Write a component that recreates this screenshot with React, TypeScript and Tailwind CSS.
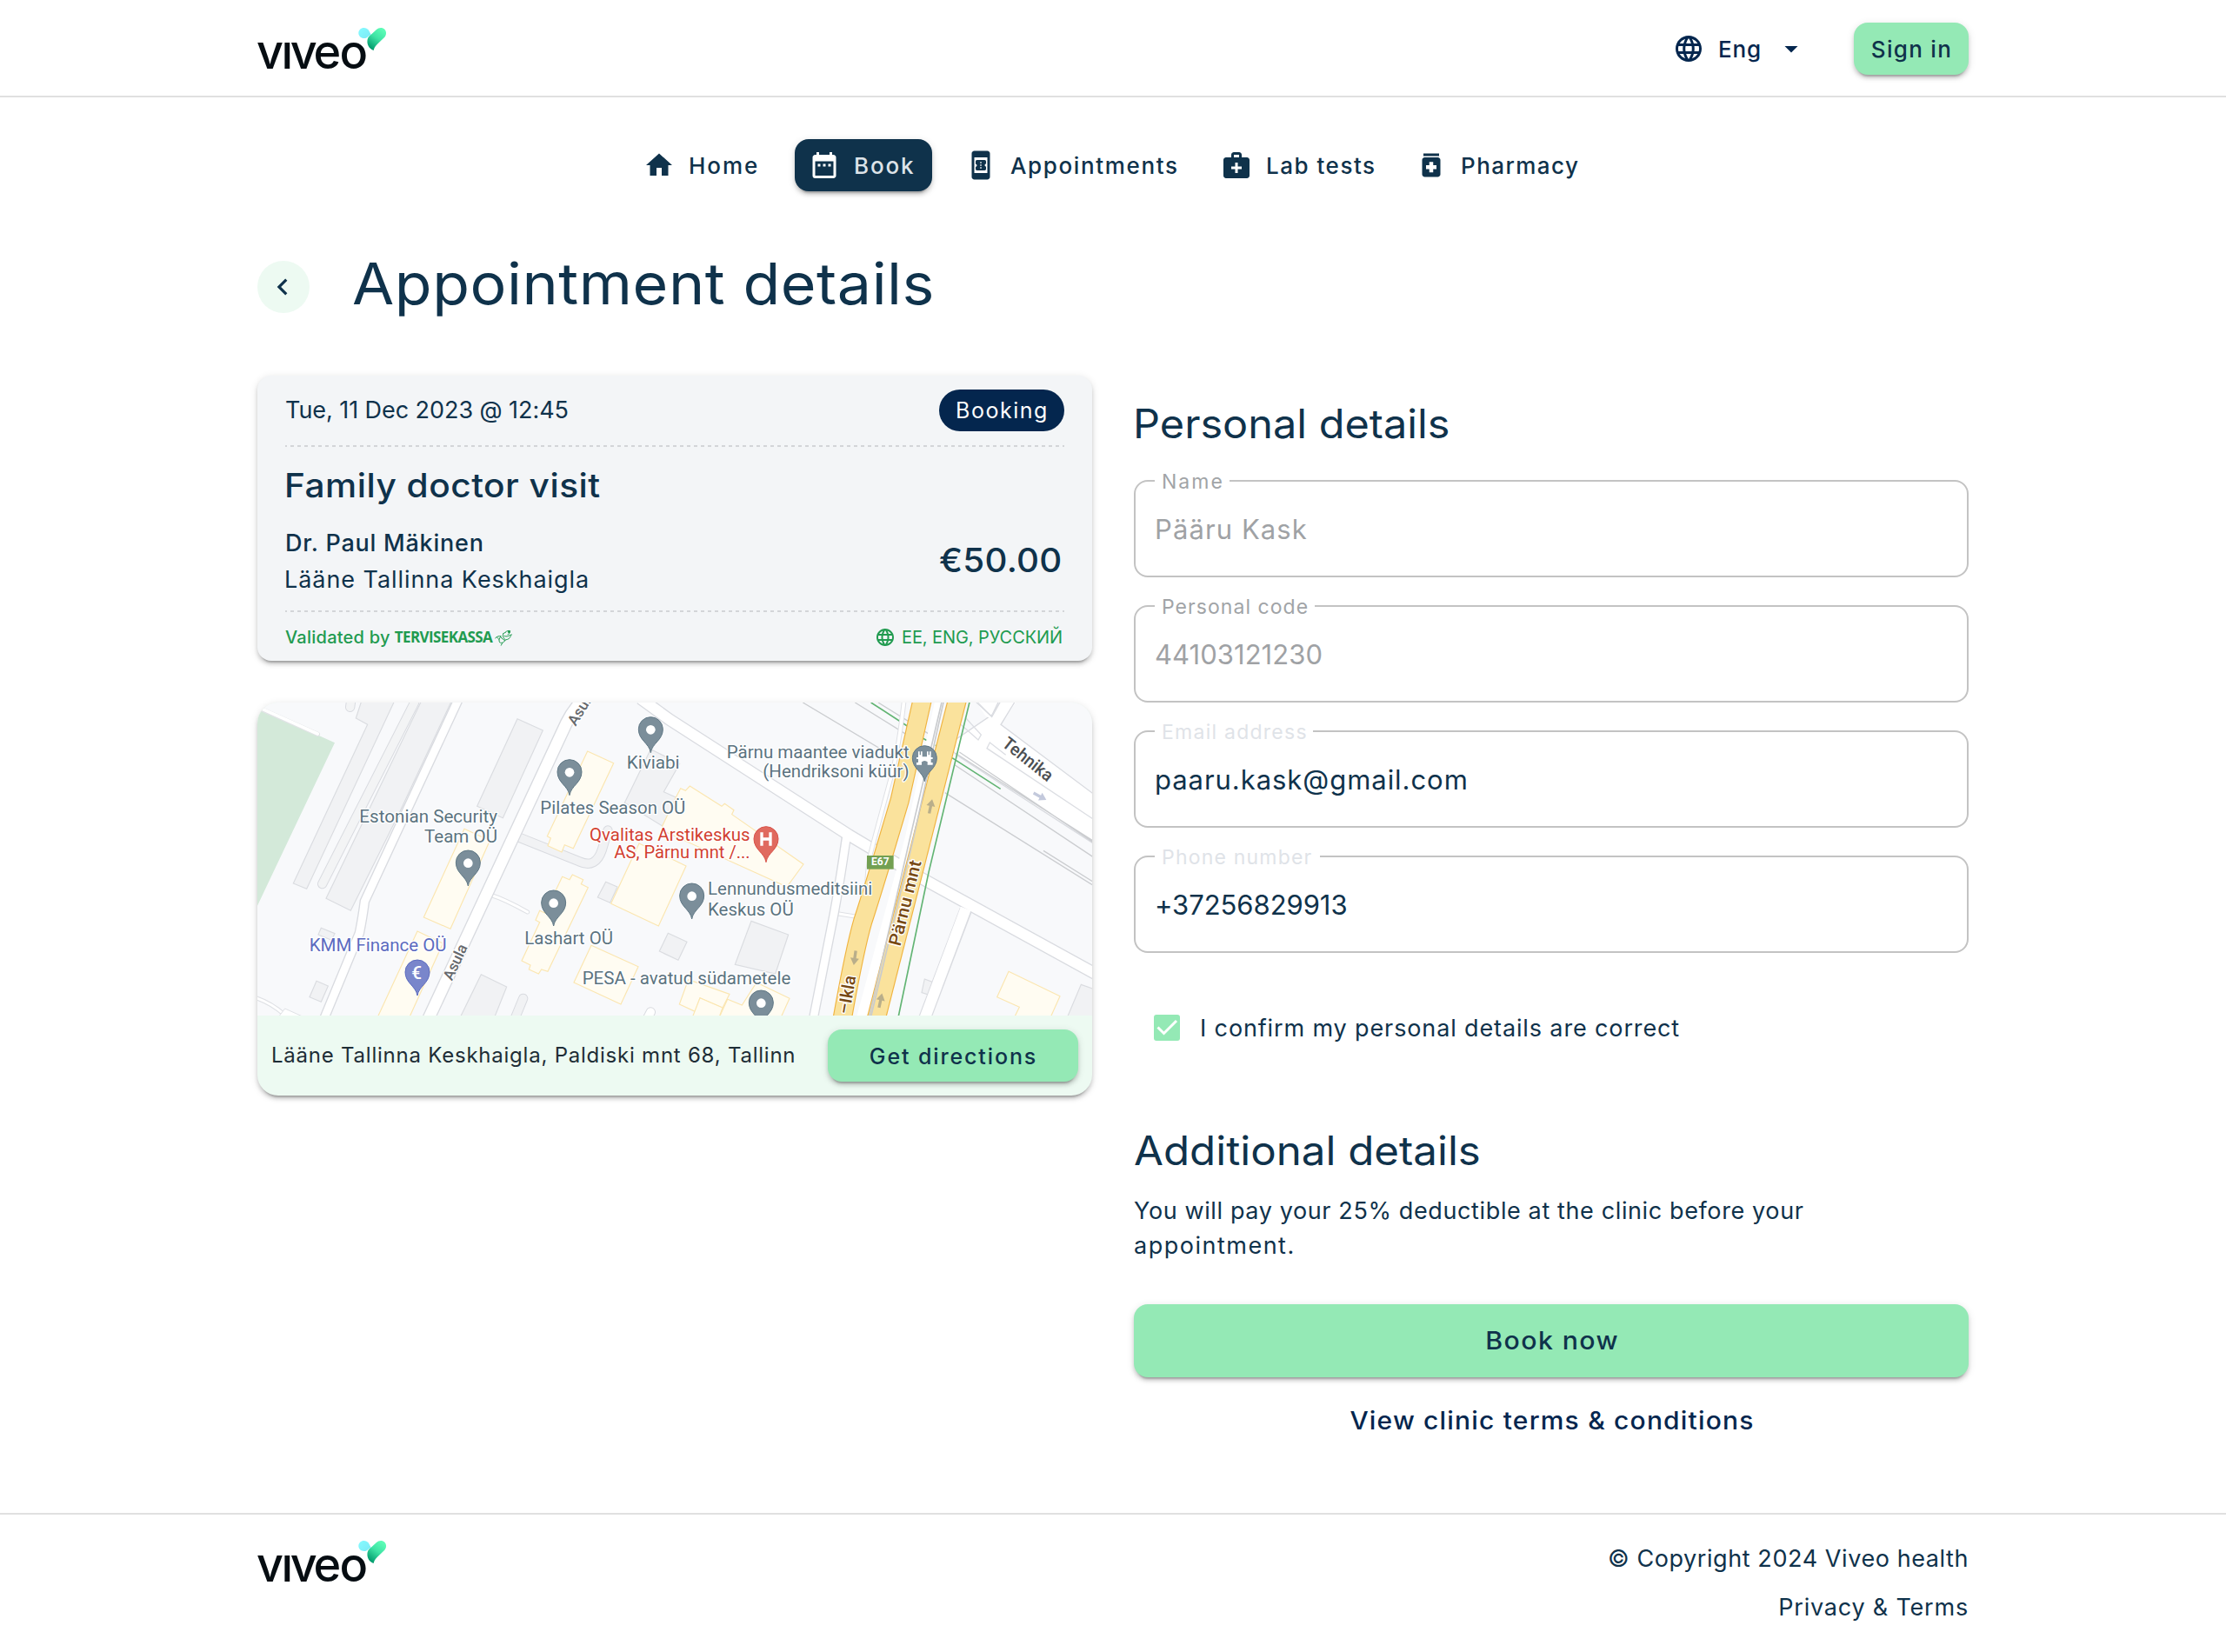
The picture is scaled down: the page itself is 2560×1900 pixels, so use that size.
import { useId } from "react";
import type { ReactNode } from "react";
import {
  MdArrowDropDown,
  MdBookOnline,
  MdChevronLeft,
  MdDateRange,
  MdHome,
  MdLanguage,
  MdMedicalServices,
  MdMedication,
} from "react-icons/md";

const RAISED =
  "shadow-[0_6px_2px_-4px_rgba(0,0,0,0.2),0_4px_4px_rgba(0,0,0,0.14),0_2px_10px_rgba(0,0,0,0.12)]";

function Logo() {
  const id = useId();
  return (
    <svg className="block h-[110px] w-[160px]" viewBox="0 0 160 110" aria-label="viveo">
      <defs>
        <linearGradient id={`${id}a`} x1="0" y1="0" x2="1" y2="1">
          <stop offset="0" stopColor="#86fbff" />
          <stop offset="1" stopColor="#7be9f5" />
        </linearGradient>
        <linearGradient id={`${id}b`} x1="0.85" y1="0.1" x2="0.3" y2="1">
          <stop offset="0" stopColor="#5cfcb6" />
          <stop offset="0.45" stopColor="#3fe3a5" />
          <stop offset="1" stopColor="#009a6c" />
        </linearGradient>
        <clipPath id={`${id}c`}>
          <rect x="-2" y="49" width="140" height="40" />
        </clipPath>
      </defs>
      <text
        clipPath={`url(#${id}c)`}
        x="-1 27.4 37.8 64.4 94.6"
        y="79"
        className="fill-[#060d12] font-['Inter'] text-[54px] font-medium"
      >
        viveo
      </text>
      <g transform="translate(-16 10) scale(0.3333)">
        <path
          d="M416 66c-11 0-19 8-19 18s8 18 19 18c6 0 9-2 12-4 4-4 8-6 13-7L431 73c-3-4-9-7-15-7z"
          fill={`url(#${id}a)`}
        />
        <path
          d="M449 144c-17-6-24-22-21-38 2-9 8-13 14-18l17-16c8-8 21-8 28-1s7 19 0 27l-25 24c-7 7-12 14-13 22z"
          fill={`url(#${id}b)`}
        />
      </g>
    </svg>
  );
}

function Header() {
  return (
    <header className="h-[112px] border-b-2 border-[#e0e0e0]">
      <div className="mx-auto flex w-[1968px] items-start">
        <Logo />
        <div className="mt-[26px] ml-auto flex h-[60px] items-center text-[26px] font-medium">
          <MdLanguage className="size-9 text-[#04264e]" />
          <span className="ml-4 pt-px tracking-[0.84px] text-[#04264e]">Eng</span>
          <MdArrowDropDown className="ml-4 size-9 text-[#04264e]" />
          <button
            className={`ml-[54px] h-[60px] w-[132px] rounded-2xl bg-[#94e9b5] pt-px pl-px font-medium tracking-[1.3px] ${RAISED}`}
          >
            Sign in
          </button>
        </div>
      </div>
    </header>
  );
}

function NavItem({
  icon,
  label,
  tracking,
  active = false,
}: {
  icon: ReactNode;
  label: string;
  tracking: string;
  active?: boolean;
}) {
  return (
    <div
      className={`flex h-[60px] items-center gap-4 justify-self-start rounded-2xl pl-4 ${
        active ? `w-[158px] bg-[#0f324b] text-white ${RAISED}` : ""
      }`}
    >
      {icon}
      <span
        className={`pt-px text-[26px] font-medium whitespace-nowrap ${tracking} ${
          active ? "text-[#dde3e8]" : ""
        }`}
      >
        {label}
      </span>
    </div>
  );
}

function Nav() {
  return (
    <nav className="mt-12 ml-[724px] grid grid-cols-[190px_180px_294px_224px_220px]">
      <NavItem icon={<MdHome className="size-9" />} label="Home" tracking="tracking-[1.95px]" />
      <NavItem icon={<MdDateRange className="size-9" />} label="Book" tracking="tracking-[1.84px]" active />
      <NavItem icon={<MdBookOnline className="size-9" />} label="Appointments" tracking="tracking-[1.64px]" />
      <NavItem icon={<MdMedicalServices className="size-9" />} label="Lab tests" tracking="tracking-[1.51px]" />
      <NavItem icon={<MdMedication className="size-9" />} label="Pharmacy" tracking="tracking-[1.45px]" />
    </nav>
  );
}

function Dashes() {
  return (
    <div className="h-0.5 bg-[repeating-linear-gradient(90deg,#d3d5d8_0_2px,transparent_2px_6px,#d3d5d8_6px_8px)]" />
  );
}

function BeeMark() {
  return (
    <svg viewBox="0 0 60 56" className="ml-[3px] h-[19px] w-5" fill="none" stroke="#219b50" strokeWidth="3" strokeLinecap="round">
      <path d="M2 29c6-6 13-8 20-6M8 26c2 4 4 6 7 8M20 24c-5 5-7 14-3 20 7 4 15 0 19-7" />
      <path d="M20 26l15 12M29 14c-3 8 1 16 8 21 8 0 15-5 18-12M29 14l8-5M33 22c8 3 14 1 20-4" />
      <path d="M37 9c4-5 10-6 16-5-1 6-3 11-8 13M53 20l6-3M26 46l-4 8" />
      <circle cx="49" cy="8" r="3" fill="#219b50" />
    </svg>
  );
}

function BookingCard() {
  return (
    <section className={`h-[328px] rounded-2xl bg-[#f3f5f7] px-8 ${RAISED}`}>
      <div className="flex h-20 items-center justify-between">
        <span className="pt-px text-[27px] tracking-[-0.06px]">Tue, 11 Dec 2023 @ 12:45</span>
        <span className="flex h-12 w-36 items-center rounded-full bg-[#04264e] pt-0.5 pl-[19px] text-[25px] tracking-[1.52px] text-white">
          Booking
        </span>
      </div>
      <Dashes />
      <div className="h-[188px] pt-5">
        <h2 className="-ml-px origin-left scale-x-[1.07] text-[38px] leading-[48px] font-medium tracking-[0.44px]">
          Family doctor visit
        </h2>
        <div className="mt-[22px] flex items-center justify-between">
          <div className="text-[27px] leading-[42px]">
            <div className="font-medium tracking-[0.77px]">Dr. Paul Mäkinen</div>
            <div className="-ml-px tracking-[0.94px]">Lääne Tallinna Keskhaigla</div>
          </div>
          <span className="-mt-1 mr-0.5 origin-right scale-x-[1.06] text-[38px] font-medium tracking-[0.25px]">
            €50.00
          </span>
        </div>
      </div>
      <Dashes />
      <div className="flex h-14 items-center pt-0.5 text-[#219b50]">
        <span className="text-xl leading-7 font-medium tracking-[0.25px]">Validated by</span>
        <span className="ml-[5px] font-['Open_Sans'] text-[17px] leading-6 font-bold tracking-[-0.6px]">
          TERVISEKASSA
        </span>
        <BeeMark />
        <MdLanguage className="ml-auto size-6" />
        <span className="ml-[7px] text-xl leading-7 tracking-[-0.08px]">EE, ENG, РУССКИЙ</span>
        <span className="w-0.5" />
      </div>
    </section>
  );
}

function Road({ d, w }: { d: string; w: number }) {
  return (
    <>
      <path d={d} fill="none" stroke="#d9dbe0" strokeWidth={w + 4} strokeLinejoin="round" />
      <path d={d} fill="none" stroke="#fff" strokeWidth={w - 4} strokeLinejoin="round" />
    </>
  );
}

function Pin({
  x,
  y,
  fill = "#7b8e9a",
  stroke = "#607885",
  children,
}: {
  x: number;
  y: number;
  fill?: string;
  stroke?: string;
  children?: ReactNode;
}) {
  return (
    <g transform={`translate(${x} ${y})`}>
      <path
        d="M0 81C-5 48-42 38-42 0A42 42 0 1 1 42 0C42 38 5 48 0 81Z"
        fill={fill}
        stroke={stroke}
        strokeWidth="3"
      />
      {children ?? <circle r="16" cy="2" fill="#fff" />}
    </g>
  );
}

function Label({ x, x2, y, fill = "#5b7380", children }: { x: number; x2: number; y: number; fill?: string; children: string }) {
  return (
    <text
      x={x - 3}
      y={y}
      textLength={x2 - x + 6}
      lengthAdjust="spacingAndGlyphs"
      fontSize="60"
      fill={fill}
      stroke="#fff"
      strokeWidth="8"
      strokeLinejoin="round"
      paintOrder="stroke"
    >
      {children}
    </text>
  );
}

function Arrow({ x, y, r, fill = "#b9ae8a" }: { x: number; y: number; r: number; fill?: string }) {
  return (
    <path transform={`translate(${x} ${y}) rotate(${r})`} d="M0-25L15-1H5V25H-5V-1H-15Z" fill={fill} />
  );
}

const GREY_BLOCKS = [
  "388,108 410,40 525,40 218,697 172,678 428,130",
  "618,40 722,40 540,430 370,772 285,730",
  "945,110 1033,150 895,452 806,412",
  "268,832 315,851 304,874 258,855",
  "252,1015 292,1032 268,1087 228,1070",
  "820,992 908,1035 862,1150 743,1150",
  "1250,673 1290,690 1265,745 1222,726",
  "1465,850 1530,880 1500,943 1435,912",
  "1405,215 1505,265 1450,362 1500,385 1445,480 1315,400",
  "1752,808 1880,855 1835,990 1696,958",
  "2350,1008 2377,1018 2363,1062 2340,1055",
  "2890,1027 2940,1045 2940,1150 2838,1150",
];

const YELLOW_BLOCKS = [
  "1187,222 1277,263 1138,557 1108,545 1098,570 1050,548 1060,522 1048,515",
  "762,490 850,530 714,835 622,795",
  "600,843 688,885 568,1150 458,1150",
  "1135,648 1172,665 1165,680 1189,692 1050,982 1028,975 1018,990 985,975 990,960 960,945 1022,812 1008,805 1022,772 1040,780 1100,655 1125,665",
  "1200,892 1362,965 1302,1095 1140,1020",
  "1540,342 1650,412 1660,403 1692,425 1685,440 1932,612 1875,690 1455,500 1445,480 1490,385 1508,350 1525,358",
  "1365,540 1470,590 1527,618 1432,825 1268,748",
  "1535,1010 1677,1060 1653,1107 1575,1073 1558,1120 1504,1095",
  "1575,1073 1653,1107 1638,1150 1545,1150",
  "1770,1020 1884,1075 1850,1150 1637,1150 1670,1078 1720,1098",
  "2640,982 2817,1067 2780,1150 2655,1150 2677,1105 2600,1070",
];

function ClinicMap() {
  const leftYellow = "M2343 40L2264 392L2202 600Q2150 770 2137 808Q2110 900 2067 1140";
  const rightYellow = "M2464 40L2182 1150";
  return (
    <svg viewBox="48 54 2880 1080" className="block h-[360px] w-[960px] font-['Roboto']">
      <rect x="48" y="54" width="2880" height="1080" fill="#f8f9fb" />
      <polygon points="40,66 66,80 315,193 48,755 40,760" fill="#d3e9d9" />
      <g fill="none" strokeLinecap="round">
        <path d="M60 76L256 163" stroke="#e1e3e6" strokeWidth="16" />
        <path d="M60 74L256 162" stroke="#fff" strokeWidth="11" />
        <path d="M372 40L368 70M590 54L272 680" stroke="#d9dbe0" strokeWidth="34" />
        <path d="M372 40L368 70M590 54L272 680" stroke="#f3f4f5" strokeWidth="28" />
        <path d="M940 515L1160 603Q1215 628 1237 562L1257 495" stroke="#d9dbe0" strokeWidth="34" />
        <path d="M940 515L1160 603Q1215 628 1237 562L1257 495" stroke="#f1f2f4" strokeWidth="28" />
        <path d="M965 1075L930 1160M1405 1122L1385 1160" stroke="#d9dbe0" strokeWidth="34" />
        <path d="M965 1075L930 1160" stroke="#f1f2f4" strokeWidth="28" />
        <path d="M1405 1122L1385 1160" stroke="#fff" strokeWidth="28" />
        <path d="M850 717Q900 732 980 777M40 1072Q95 1090 140 1130M2050 782L2110 792" stroke="#dfe1e5" strokeWidth="15" />
        <path d="M850 717Q900 732 980 777M40 1072Q95 1090 140 1130M2050 782L2110 792" stroke="#fff" strokeWidth="9" />
      </g>
      <path d="M120 1140L143 1110L210 1140Z" fill="#fff" stroke="#dfe1e5" strokeWidth="3" />

      {GREY_BLOCKS.map((p) => (
        <polygon key={p} points={p} fill="#f1f2f4" stroke="#dadce0" strokeWidth="3.5" />
      ))}
      {YELLOW_BLOCKS.map((p) => (
        <polygon key={p} points={p} fill="#fffcf2" stroke="#fbe6b0" strokeWidth="3.5" />
      ))}

      <Road d="M743 40L418 740Q412 790 400 850L276 1150" w={31} />
      <Road d="M1185 30Q1138 75 1114 125L636 1150" w={42} />
      <path d="M2081 510Q2060 660 2038 780L1965 1150M2492 770L2350 1150" fill="none" stroke="#d9dbe0" strokeWidth="34" />
      <path d="M2492 770L2348 1150" fill="none" stroke="#d9dbe0" strokeWidth="44" />
      <Road d="M1370 40L1470 113L2090 512L2330 655L2940 990" w={40} />
      <path d="M2083 500Q2060 660 2038 780L1965 1150" fill="none" stroke="#fff" strokeWidth="26" />
      <path d="M2492 765L2348 1150" fill="none" stroke="#fff" strokeWidth="37" />

      <path
        d="M2430 40H2520L2580 103L2608 45M2665 40L2613 130L2940 375V545L2460 235L2430 200Z"
        fill="#fff"
        stroke="#d9dbe0"
        strokeWidth="4"
      />
      <path d="M2520 40L2580 103L2612 50L2665 54L2613 130L2560 100Z" fill="#fff" />
      <path d="M2520 45L2582 103L2612 50M2660 54L2613 130" fill="none" stroke="#d9dbe0" strokeWidth="4" />
      <path
        d="M2490 105L2545 165L2535 183L2475 130M2630 235L2575 192L2565 212L2930 455"
        fill="none"
        stroke="#dcdee3"
        strokeWidth="4"
      />
      <g fill="none" stroke="#cbcdd0" strokeWidth="4">
        <path d="M1930 54L2250 245M2110 54L2300 172M2190 54L2390 178" />
        <path d="M2455 228L2930 530M2455 270L2930 586M2420 365L2930 684M2760 565L2930 672M2470 225L2930 535" />
      </g>
      <path d="M2165 54L2290 135M2345 178L2390 203M2445 245L2612 352" fill="none" stroke="#62b473" strokeWidth="5" />

      <g fill="none">
        <path d="M2280 40Q2262 200 2240 290L2170 550Q2155 600 2150 690" stroke="#dfe1e5" strokeWidth="17" />
        <path d="M2280 40Q2262 200 2240 290L2170 550Q2155 600 2150 690" stroke="#fff" strokeWidth="11" />
        <path d="M2405 40L2300 520L2130 1150" stroke="#fff" strokeWidth="34" />
        <path d={leftYellow} stroke="#f0b440" strokeWidth="67" />
        <path d={rightYellow} stroke="#f0b440" strokeWidth="66" />
        <path d={leftYellow} stroke="#fae29c" strokeWidth="60" />
        <path d={rightYellow} stroke="#fae29c" strokeWidth="59" />
        <path d="M2412 40L2300 520L2156 1150" stroke="#c9cbce" strokeWidth="5" />
        <path d="M2418 40L2312 520L2162 1150" stroke="#c9cbce" strokeWidth="5" />
        <path d="M2508 40L2364 640L2257 1150" stroke="#62b473" strokeWidth="5" />
      </g>

      <Arrow x={2371} y={412} r={12} />
      <Arrow x={2198} y={1082} r={12} />
      <Arrow x={2109} y={935} r={188} />
      <Arrow x={2748} y={378} r={118} fill="#c3c9dc" />

      <g stroke="#fff" strokeWidth="8" paintOrder="stroke" strokeLinejoin="round" fontWeight="500">
        <text transform="translate(1146 137) rotate(-58)" fontSize="52" fill="#66696d">Asula</text>
        <text transform="translate(719 1016) rotate(-65)" fontSize="52" fill="#66696d" textLength="130">Asula</text>
        <text transform="translate(2614 202) rotate(38.5)" fontSize="60" fill="#4b4e52" textLength="204" lengthAdjust="spacingAndGlyphs">Tehnika</text>
        <text transform="translate(2266 897) rotate(-76)" fontSize="60" fill="#784a14" textLength="302" lengthAdjust="spacingAndGlyphs">Pärnu mnt</text>
        <text transform="translate(2090 1132) rotate(-80)" fontSize="60" fill="#784a14">–Ikla</text>
      </g>
      <rect x="2151" y="582" width="92" height="47" fill="#73a052" />
      <text x="2197" y="616" fontSize="36" fontWeight="700" fill="#fff" textAnchor="middle">E67</text>

      <Label x={1325} x2={1502} y={283}>Kiviabi</Label>
      <Label x={1027} x2={1522} y={437}>Pilates Season OÜ</Label>
      <Label x={403} x2={873} y={467}>Estonian Security</Label>
      <Label x={627} x2={873} y={537}>Team OÜ</Label>
      <Label x={973} x2={1272} y={888}>Lashart OÜ</Label>
      <Label x={1172} x2={1885} y={1025}>PESA - avatud südametele</Label>
      <Label x={1605} x2={2167} y={718}>Lennundusmeditsiini</Label>
      <Label x={1605} x2={1895} y={788}>Keskus OÜ</Label>
      <Label x={1670} x2={2294} y={246}>Pärnu maantee viadukt</Label>
      <Label x={1795} x2={2294} y={312}>(Hendriksoni küür)</Label>
      <Label x={230} x2={698} y={912} fill="#5c6bc0">KMM Finance OÜ</Label>
      <Label x={1197} x2={1745} y={531} fill="#d23f31">Qvalitas Arstikeskus</Label>
      <Label x={1282} x2={1745} y={591} fill="#d23f31">AS, Pärnu mnt /...</Label>

      <Pin x={1405} y={146} />
      <Pin x={1125} y={293} />
      <Pin x={775} y={606} />
      <Pin x={1070} y={744} />
      <Pin x={1547} y={720} />
      <Pin x={1786} y={1089} />
      <Pin x={600} y={984} fill="#7986cb" stroke="#5c6bc0">
        <text x="-3" y="23" fontSize="62" fontWeight="500" fill="#fff" textAnchor="middle">€</text>
      </Pin>
      <Pin x={1803} y={524} fill="#e06a5f" stroke="#d8534a">
        <path d="M-20-22h10v18h20v-18h10v46H10V6h-20v18h-10z" fill="#fff" />
      </Pin>
      <Pin x={2350} y={245}>
        <path
          d="M-22-22h5v12h4v-12h5v18H8v-18h5v12h4v-12h5v20h6v6h-6v12h6v8H10v-8h2q-12-12-24 0h2v8h-18v-8h6V4h-6v-6h6z"
          fill="#fff"
        />
      </Pin>
    </svg>
  );
}

function MapCard() {
  return (
    <section className={`mt-12 overflow-hidden rounded-3xl bg-[#edfaf2] ${RAISED}`}>
      <ClinicMap />
      <div className="flex h-[92px] items-center pr-4 pl-4">
        <span className="text-2xl tracking-[0.77px] text-[#1e2d36]">
          Lääne Tallinna Keskhaigla, Paldiski mnt 68, Tallinn
        </span>
        <button
          className={`ml-auto h-[60px] w-72 rounded-2xl bg-[#94e9b5] pt-[3px] pl-px text-[25px] font-medium tracking-[1.88px] ${RAISED}`}
        >
          Get directions
        </button>
      </div>
    </section>
  );
}

function Field({
  label,
  value,
  labelClass,
  valueClass,
}: {
  label: string;
  value: string;
  labelClass: string;
  valueClass: string;
}) {
  return (
    <div className="relative flex h-28 items-center rounded-2xl border-2 border-[#c3c3c3] pt-0.5 pl-[22px]">
      <span
        className={`absolute -top-3 left-[22px] h-6 bg-white pl-2 text-[23px] leading-6 whitespace-nowrap ${labelClass}`}
      >
        {label}
      </span>
      <span className={`text-[31px] ${valueClass}`}>{value}</span>
    </div>
  );
}

function PersonalDetails() {
  return (
    <div>
      <h2 className="-ml-px origin-left scale-x-[1.057] pt-[27px] text-[46px] leading-[56px]">Personal details</h2>
      <div className="mt-[37px] flex flex-col gap-8">
        <Field
          label="Name"
          value="Pääru Kask"
          labelClass="w-[86px] tracking-[2px] text-[#a1a4a7]"
          valueClass="tracking-[1.1px] text-[#9fa2a5]"
        />
        <Field
          label="Personal code"
          value="44103121230"
          labelClass="w-[184px] tracking-[1.05px] text-[#a1a4a7]"
          valueClass="tracking-[0.05px] text-[#9fa2a5]"
        />
        <Field
          label="Email address"
          value="paaru.kask@gmail.com"
          labelClass="w-[182px] tracking-[1.25px] text-[#dfe3e8]"
          valueClass="tracking-[0.95px]"
        />
        <Field
          label="Phone number"
          value="+37256829913"
          labelClass="w-[190px] tracking-[1.2px] text-[#dfe3e8]"
          valueClass="tracking-[-0.05px]"
        />
      </div>
      <label className="mt-14 flex h-[60px] items-center pl-[23px]">
        <svg viewBox="0 0 30 30" className="size-[30px]">
          <rect width="30" height="30" rx="3" fill="#94e9b5" />
          <path d="M4.5 14.5L11.5 21.5L26 7" fill="none" stroke="#fff" strokeWidth="3" />
        </svg>
        <span className="ml-[23px] pt-0.5 text-[27px] tracking-[0.87px]">
          I confirm my personal details are correct
        </span>
      </label>
      <h2 className="mt-[83px] mb-[21px] origin-left scale-x-[1.07] text-[46px] leading-[56px]">Additional details</h2>
      <p className="relative top-px text-[27px] leading-10 tracking-[0.62px]">
        You will pay your 25% deductible at the clinic before your
        <br />
        <span className="tracking-[1.5px]">appointment.</span>
      </p>
      <button className={`mt-12 block h-[84px] w-full rounded-2xl bg-[#94e9b5] ${RAISED}`}>
        <span className="ml-0.5 inline-block scale-x-[1.08] text-[28px] font-medium tracking-[1.3px]">Book now</span>
      </button>
      <div className="mt-[30px] ml-0.5 scale-x-[1.07] text-center text-[28px] leading-10 font-medium tracking-[1.12px] text-[#04264e]">
        View clinic terms &amp; conditions
      </div>
    </div>
  );
}

function Footer() {
  return (
    <footer className="h-40 border-t-2 border-[#e0e0e0]">
      <div className="mx-auto flex w-[1968px] items-start justify-between">
        <div className="-mt-0.5">
          <Logo />
        </div>
        <div className="pt-[23px] text-right text-[27px] leading-[56px]">
          <div className="tracking-[0.58px]">© Copyright 2024 Viveo health</div>
          <div className="tracking-[0.8px]">Privacy &amp; Terms</div>
        </div>
      </div>
    </footer>
  );
}

export default function App() {
  return (
    <div className="h-[1900px] w-[2560px] overflow-hidden bg-white font-['Inter',sans-serif] text-[#0f324b]">
      <Header />
      <Nav />
      <main className="mx-auto mt-20 h-[1440px] w-[1968px]">
        <div className="flex h-[60px] items-center">
          <button className="flex size-[60px] items-center justify-center rounded-full bg-[#edfaf2]">
            <MdChevronLeft className="-ml-0.5 size-[38px]" />
          </button>
          <h1 className="-mt-2 ml-[49px] origin-left scale-x-[1.06] text-[66px] leading-[72px] tracking-[0.5px]">
            Appointment details
          </h1>
        </div>
        <div className="mt-[72px] grid grid-cols-[960px_960px] gap-12">
          <div>
            <BookingCard />
            <MapCard />
          </div>
          <PersonalDetails />
        </div>
      </main>
      <Footer />
    </div>
  );
}
